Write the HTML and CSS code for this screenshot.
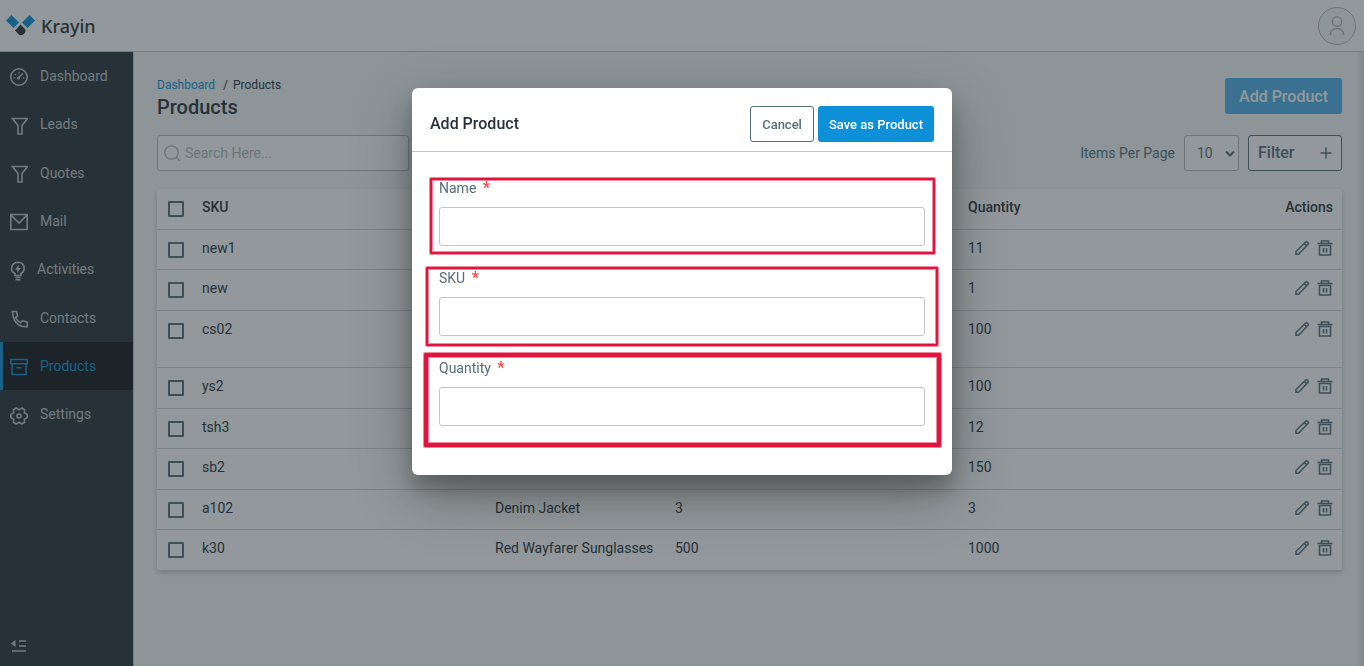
FILE: index.html
```html
<!DOCTYPE html>
<html lang="en">
<head>
<meta charset="utf-8">
<title>Products - Krayin</title>
<link rel="stylesheet" href="styles.css">
</head>
<body>
<svg class="sprite" aria-hidden="true">
  <symbol id="i-pencil" viewBox="0 0 16 16"><path d="M2 14.200v-2.700L11.800 2q.7-.6 1.300 0l1 1q.6.700 0 1.300L4.600 14.200zM10.300 3.500l2.300 2.300"/></symbol>
  <symbol id="i-trash" viewBox="0 0 16 16"><path d="M.5 3.500h15M4.500 3V1h7v2M2.500 5.500h11v9.500h-11zM6.500 8v4.500M9.500 8v4.500"/></symbol>
</svg>
<div class="app">
  <header class="topbar">
    <a class="logo" href="#">
      <svg width="29" height="21" viewBox="0 0 29 21" aria-hidden="true">
        <path fill="#0e90d9" d="M0 5.500 5.500 0 13 7.500 7.500 13zM16 7.500 23.500 0 29 5.500 21.500 13z"/>
        <path fill="#263238" d="m14.500 9.500 4.500 4.500q1.500 2-.3 4-1.500 2.200-3.700 2.200-1.500 0-2.500-1l-3.500-3.700z"/>
      </svg>
      <span>Krayin</span>
    </a>
    <button class="avatar" type="button" aria-label="Account">
      <svg width="16" height="20" viewBox="0 0 16 20"><circle cx="8" cy="5.500" r="4.700"/><path d="M1.500 19v-1.500q1-5 6.500-5t6.500 5V19"/></svg>
    </button>
  </header>
  <div class="layout">
    <nav class="sidebar">
      <a href="#"><svg width="18" height="18" viewBox="0 0 18 18"><circle cx="9" cy="9" r="8.200"/><path d="m8.500 10 4.300-4.500M3.500 10h1.400M5 6.500h1.300M8.300 4.500h1.300M13 10h1.400"/><circle cx="8.500" cy="10" r=".8"/></svg>Dashboard</a>
      <a href="#"><svg width="18" height="18" viewBox="0 0 18 18"><path d="M2.500 1.500h15l-5.500 7v8.500H8V8.500z"/></svg>Leads</a>
      <a href="#"><svg width="18" height="18" viewBox="0 0 18 18"><path d="M2.500 1.500h15l-5.500 7v8.500H8V8.500z"/></svg>Quotes</a>
      <a href="#"><svg width="18" height="18" viewBox="0 0 18 18"><path d="M.8 1.500h16.400v15H.8zM1 2l8 8 8-8"/></svg>Mail</a>
      <a href="#"><svg width="15" height="20" viewBox="0 0 15 20"><path d="M5 14.500v-2Q1.500 11 1.500 7.500 2 1.500 8 1.200q6 .3 6.200 6.300Q14 11 11 12.500v2zM5.500 16.500h5M5.500 18.700h5"/><path class="solid" d="M8.800 3.500 5 8.800h2.500L7 12l4-5H8.500z"/></svg>Activities</a>
      <a href="#"><svg width="18" height="18" viewBox="0 0 18 18"><path d="M2.500 1.500h4L7.500 6 5.500 7.500q1.500 3.500 5 5.300l1.700-2 5 1.200v4.700Q3.500 17.500 2.500 1.500z"/></svg>Contacts</a>
      <a class="active" href="#"><svg width="18" height="18" viewBox="0 0 18 18"><path d="M.8 1.500h16.400v4.300H.8zM2 6v10.500h14V6M6.500 9.700h5"/></svg>Products</a>
      <a href="#"><svg width="18" height="18" viewBox="0 0 18 18"><path stroke-linejoin="round" d="M11.800 1 14.500 2.600 14.400 5.900 17.200 7.400V10.600L14.400 12.100 14.500 15.400 11.800 17 9 15.200 6.200 17 3.500 15.400 3.600 12.100.8 10.600V7.400L3.600 5.900 3.500 2.600 6.200 1 9 2.800z"/><circle cx="9" cy="9" r="2"/></svg>Settings</a>
      <button class="collapse" type="button" aria-label="Collapse menu">
        <svg width="16" height="14" viewBox="0 0 16 14"><path class="solid" d="M0 4.500 4.500 1v7z"/><path d="M8 2h7M8 7h7M1 12h14"/></svg>
      </button>
    </nav>
    <main class="content">
      <div class="heading">
        <div>
          <div class="crumbs"><a href="#">Dashboard</a><span>/</span>Products</div>
          <h1>Products</h1>
        </div>
        <button class="btn add" type="button">Add Product</button>
      </div>
      <div class="toolbar">
        <label class="search">
          <svg width="17" height="17" viewBox="0 0 17 17" aria-hidden="true"><circle cx="7.500" cy="7.500" r="6.700"/><path d="m12.300 12.300 3.700 3.700"/></svg>
          <input type="search" placeholder="Search Here..." aria-label="Search">
        </label>
        <div class="tools">
          <label for="per-page">Items Per Page</label>
          <span class="select"><select id="per-page"><option>10</option></select>
            <svg width="10" height="8" viewBox="0 0 10 8" aria-hidden="true"><path d="m1 1.500 4 4 4-4"/></svg></span>
          <button class="btn filter" type="button">Filter
            <svg width="12" height="12" viewBox="0 0 12 12" aria-hidden="true"><path d="M6 .5v11M.5 6h11"/></svg></button>
        </div>
      </div>
      <table class="grid">
        <colgroup><col class="c-check"><col class="c-wide"><col class="c-name"><col class="c-wide"><col><col></colgroup>
        <thead><tr><th><input type="checkbox" aria-label="Select all"></th><th>SKU</th><th>Name</th><th>Price</th><th>Quantity</th><th class="actions">Actions</th></tr></thead>
        <tbody>
          <tr><td><input type="checkbox" aria-label="Select new1"></td><td>new1</td><td></td><td></td><td>11</td><td class="actions"><button type="button" aria-label="Edit"><svg><use href="#i-pencil"/></svg></button><button type="button" aria-label="Delete"><svg><use href="#i-trash"/></svg></button></td></tr>
          <tr><td><input type="checkbox" aria-label="Select new"></td><td>new</td><td></td><td></td><td>1</td><td class="actions"><button type="button" aria-label="Edit"><svg><use href="#i-pencil"/></svg></button><button type="button" aria-label="Delete"><svg><use href="#i-trash"/></svg></button></td></tr>
          <tr class="tall"><td><input type="checkbox" aria-label="Select cs02"></td><td>cs02</td><td></td><td></td><td>100</td><td class="actions"><button type="button" aria-label="Edit"><svg><use href="#i-pencil"/></svg></button><button type="button" aria-label="Delete"><svg><use href="#i-trash"/></svg></button></td></tr>
          <tr><td><input type="checkbox" aria-label="Select ys2"></td><td>ys2</td><td></td><td></td><td>100</td><td class="actions"><button type="button" aria-label="Edit"><svg><use href="#i-pencil"/></svg></button><button type="button" aria-label="Delete"><svg><use href="#i-trash"/></svg></button></td></tr>
          <tr><td><input type="checkbox" aria-label="Select tsh3"></td><td>tsh3</td><td></td><td></td><td>12</td><td class="actions"><button type="button" aria-label="Edit"><svg><use href="#i-pencil"/></svg></button><button type="button" aria-label="Delete"><svg><use href="#i-trash"/></svg></button></td></tr>
          <tr><td><input type="checkbox" aria-label="Select sb2"></td><td>sb2</td><td></td><td></td><td>150</td><td class="actions"><button type="button" aria-label="Edit"><svg><use href="#i-pencil"/></svg></button><button type="button" aria-label="Delete"><svg><use href="#i-trash"/></svg></button></td></tr>
          <tr><td><input type="checkbox" aria-label="Select a102"></td><td>a102</td><td>Denim Jacket</td><td>3</td><td>3</td><td class="actions"><button type="button" aria-label="Edit"><svg><use href="#i-pencil"/></svg></button><button type="button" aria-label="Delete"><svg><use href="#i-trash"/></svg></button></td></tr>
          <tr><td><input type="checkbox" aria-label="Select k30"></td><td>k30</td><td>Red Wayfarer Sunglasses</td><td>500</td><td>1000</td><td class="actions"><button type="button" aria-label="Edit"><svg><use href="#i-pencil"/></svg></button><button type="button" aria-label="Delete"><svg><use href="#i-trash"/></svg></button></td></tr>
        </tbody>
      </table>
    </main>
  </div>
</div>
<div class="overlay">
  <form class="modal" role="dialog" aria-labelledby="modal-title">
    <div class="modal-head">
      <h2 id="modal-title">Add Product</h2>
      <div class="modal-actions">
        <button class="btn small outline" type="button">Cancel</button>
        <button class="btn small primary" type="submit">Save as Product</button>
      </div>
    </div>
    <div class="modal-body">
      <div class="field mark-name"><label for="name">Name <b>*</b></label><input id="name" type="text"></div>
      <div class="field mark-sku"><label for="sku">SKU <b>*</b></label><input id="sku" type="text"></div>
      <div class="field mark-quantity"><label for="quantity">Quantity <b>*</b></label><input id="quantity" type="text"></div>
    </div>
  </form>
</div>
</body>
</html>
```
FILE: styles.css
```css
* { box-sizing: border-box; }
body { margin: 0; font: 14px/16px Roboto, "Liberation Sans", sans-serif; color: #263238; background: #f4f9fa; }
button, input, select { font: inherit; color: inherit; margin: 0; }
button { padding: 0; border: 0; background: none; cursor: pointer; }
a { color: #0e90d9; text-decoration: none; }
svg { display: block; flex: none; fill: none; stroke: currentColor; }
.sprite { position: absolute; width: 0; height: 0; }

.app { min-height: 100vh; display: flex; flex-direction: column; box-shadow: inset -8px 0 8px -6px rgba(0, 0, 0, .15); }
.topbar { height: 52px; display: flex; align-items: center; justify-content: space-between; padding: 0 8px 0 6px; background: #fff; border-bottom: 1px solid #c7c9cb; }
.logo { display: flex; align-items: center; gap: 6px; color: #263238; font: 500 18px/24px "Noto Sans", sans-serif; }
.logo svg { stroke: none; }
.avatar { width: 38px; height: 38px; display: grid; place-items: center; border: 1px solid #b4b8bc; border-radius: 50%; background: #f4f9fa; color: #b4b8bc; }
.avatar svg { stroke-width: 1.500; }

.layout { flex: 1; display: flex; }
.sidebar { flex: none; width: 134px; display: flex; flex-direction: column; background: #263238; border-right: 1px solid #c7c9cb; }
.sidebar a { height: 48px; display: flex; align-items: center; gap: 12px; padding: 0 0 1px 7px; border-left: 3px solid transparent; color: #c0c5c8; }
.sidebar a:nth-child(3n-1) { height: 49px; }
.sidebar a svg { stroke-width: 1.600; margin-top: 3px; }
.sidebar .active { color: #0e90d9; border-color: #0e90d9; background: #12171b; }
.solid { fill: currentColor; stroke: none; }
.collapse { margin-top: auto; padding: 0 0 13px 11px; color: #c0c5c8; }
.collapse svg { stroke-width: 1.600; }

.content { flex: 1; min-width: 0; padding: 25px 22px 25px 23px; }
.heading { display: flex; justify-content: space-between; align-items: flex-start; }
.crumbs { font-size: 12px; }
.crumbs span { margin: 0 5px 0 8px; }
h1 { margin: 2px 0 0; font-size: 20px; line-height: 24px; font-weight: 500; }
.btn { height: 36px; border-radius: 3px; font-weight: 500; font-size: 16px; }
.add { margin-top: 1px; padding: 1px 14px 0; background: #4eb1ea; color: #fff; }
.toolbar { display: flex; justify-content: space-between; align-items: center; margin-top: 16px; }
.search { width: 252px; height: 36px; display: flex; align-items: center; gap: 4px; padding: 0 6px; border: 1px solid #b4b8bc; border-radius: 3px; background: #fff; color: #b4b8bc; }
.search input { flex: 1; min-width: 0; padding: 0; border: 0; outline: 0; background: none; }
.search input::placeholder { color: #b0bac0; opacity: 1; }
.search svg { stroke-width: 1.300; }
.tools { display: flex; align-items: center; gap: 9px; color: #546e7a; }
.select { position: relative; }
.select select { width: 55px; height: 36px; padding: 0 12px; appearance: none; border: 1px solid #b4b8bc; border-radius: 3px; background: #fff; }
.select svg { position: absolute; right: 4px; top: 15px; stroke-width: 2; pointer-events: none; }
.filter { width: 94px; display: flex; align-items: center; justify-content: space-between; padding: 0 9px; border: 1px solid #546e7a; background: #fff; }
.filter svg { stroke-width: 1.500; }

.grid { width: 100%; margin-top: 18px; table-layout: fixed; border-collapse: separate; border-spacing: 0; background: #fff; border-radius: 4px; box-shadow: 0 2px 5px rgba(0, 0, 0, .2); }
.c-check { width: 34px; }
.c-wide { width: 293px; }
.c-name { width: 180px; }
.grid th, .grid td { padding: 10px 9px 0 11px; text-align: left; vertical-align: top; border-bottom: 1px solid #d3d6d8; }
.grid th { font-weight: 500; }
.grid th:first-child, .grid td:first-child { padding-right: 0; }
.grid tr { height: 41px; }
.grid tbody tr:nth-child(odd) { height: 40px; }
.grid tbody .tall:nth-child(odd) { height: 57px; }
.grid input { display: block; width: 16px; height: 16px; margin-top: 2px; appearance: none; border: 2px solid #546e7a; border-radius: 1px; }
.grid .actions { text-align: right; }
.actions button { margin-left: 7px; vertical-align: top; color: #546e7a; }
.actions svg { width: 16px; height: 16px; stroke-width: 1.600; }

.overlay { position: fixed; inset: 0; padding: 88px 16px 16px; background: rgba(38, 50, 56, .5); }
.modal { max-width: 540px; margin: 0 auto; background: #fff; border-radius: 6px; box-shadow: 0 19px 60px rgba(0, 0, 0, .3), 0 15px 20px rgba(0, 0, 0, .22); }
.modal-head { display: flex; align-items: center; justify-content: space-between; padding: 18px 18px 9px; border-bottom: 1px solid #c3c5c8; }
.modal-head h2 { margin: 0; font-size: 16px; line-height: 18px; font-weight: 500; }
.modal-actions { display: flex; gap: 4px; }
.small { padding: 1px 11px 0; font-size: 13px; }
.outline { border: 1px solid #546e7a; background: #fff; color: #546e7a; }
.primary { background: #0e90d9; color: #fff; }
.modal-body { display: grid; gap: 24px; padding: 28px 27px 49px; }
.field { position: relative; display: grid; gap: 11px; }
.field label { color: #546e7a; }
.field b { margin-left: 3px; font-size: 16px; line-height: 14px; color: #ff4848; }
.field input { width: 100%; height: 39px; padding: 0 10px; border: 1px solid #c3c5c8; border-radius: 3px; background: #fff; }
.field::after { content: ""; position: absolute; border: 2px solid #e0143c; border-radius: 1px; box-shadow: 0 0 0 1px #f08aa0, inset 0 0 0 1px #f08aa0; pointer-events: none; }
.mark-name::after { inset: -2px -10px -8px -9px; }
.mark-sku::after { inset: -3px -13px -10px -13px; }
.mark-quantity::after { inset: -7px -16px -21px -15px; border-width: 4px; }
```
